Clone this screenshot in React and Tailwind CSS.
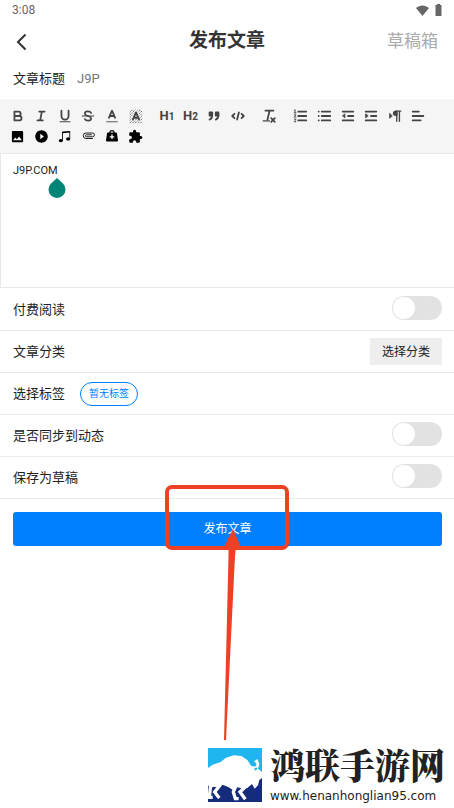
import React, { useState } from "react";
import { MdImage, MdPlayCircleFilled, MdExtension } from "react-icons/md";
import { BsMusicNoteBeamed } from "react-icons/bs";

function ToolIcon({ children }) {
  return (
    <svg className="w-4 h-4" viewBox="0 0 18 18" fill="none" stroke="#444" strokeWidth="2" strokeLinejoin="round" strokeLinecap="round">
      {children}
    </svg>
  );
}

function Heading({ level }) {
  return (
    <span className="flex items-baseline text-[13px] leading-4 font-bold text-[#444]">
      H<span className="text-[10px]">{level}</span>
    </span>
  );
}

const textTools = [
  { name: "Bold", icon: <ToolIcon><path d="M5 4h4.5a2.5 2.5 0 0 1 0 5H5zM5 9h5.5a2.5 2.5 0 0 1 0 5H5z" /></ToolIcon> },
  { name: "Italic", icon: <ToolIcon><path d="M7 4h6M5 14h6M8 14l2-10" /></ToolIcon> },
  { name: "Underline", icon: <ToolIcon><path d="M5 3v6a4 4 0 0 0 8 0V3" /><path strokeWidth="1.3" d="M3.5 15.5h11" /></ToolIcon> },
  {
    name: "Strike",
    icon: (
      <ToolIcon>
        <path strokeWidth="1.300" d="M2.500 9h13" />
        <path strokeWidth="1.900" d="M12.500 5.500C11.500 3.500 5.500 3 5.500 6.200c0 1.500 1.500 2.300 3.500 2.800M5.500 12.500c1 2 7 2.500 7-.7 0-1.300-1-2-2.500-2.500" />
      </ToolIcon>
    ),
  },
  { name: "Color", icon: <ToolIcon><path d="M5.500 11L9 3l3.500 8M11.600 9H6.400" /><path strokeWidth="1" d="M3 15.500h12" /></ToolIcon> },
  {
    name: "Background",
    icon: (
      <ToolIcon>
        <path strokeWidth="1" strokeDasharray="1.500 1" strokeLinecap="butt" d="M2 5l3-3M2 8l6-6M2 11l9-9M2 14L14 2M2 17L16 3M5 17L16 6M8 17l8-8M11 17l5-5M14 17l2-2" />
        <path stroke="#f5f5f5" strokeWidth="4" d="M5.500 13L9 5l3.500 8" />
        <path strokeWidth="2.200" d="M5.500 13L9 5l3.500 8M11.600 11H6.400" />
      </ToolIcon>
    ),
  },
  null,
  { name: "Heading 1", icon: <Heading level={1} /> },
  { name: "Heading 2", icon: <Heading level={2} /> },
  {
    name: "Quote",
    icon: (
      <ToolIcon>
        <path fill="#444" d="M4 5h3v3.500H4zM11 5h3v3.500h-3z" />
        <path d="M7 8c0 3-1 4.500-3 5M14 8c0 3-1 4.500-3 5" />
      </ToolIcon>
    ),
  },
  { name: "Code", icon: <ToolIcon><path d="M5 6.500L2.500 9 5 11.500M13 6.500L15.500 9 13 11.500M10 5L8 13" /></ToolIcon> },
  null,
  {
    name: "Clear format",
    icon: (
      <ToolIcon>
        <path d="M5 3h9M9.700 3L7.300 13M11.500 11.500l4 4M15.500 11.500l-4 4" />
        <path strokeWidth="1.300" d="M2.500 14.500h7" />
      </ToolIcon>
    ),
  },
  null,
  {
    name: "Ordered list",
    icon: (
      <ToolIcon>
        <path d="M7 4h9M7 9h9M7 14h9" />
        <path strokeWidth="1" d="M2.500 2.500l1-.5v3.500M2.500 5.500h2M2.500 7.700h2l-2 2.600h2M2.500 12.500h2l-1 1.500 1 1.500h-2" />
      </ToolIcon>
    ),
  },
  { name: "Bullet list", icon: <ToolIcon><path d="M6.500 4H16M6.500 9H16M6.500 14H16M3 4h.1M3 9h.1M3 14h.1" /></ToolIcon> },
  { name: "Outdent", icon: <ToolIcon><path d="M3 4h12M9 9h6M3 14h12" /><path fill="#444" strokeWidth="1" d="M5.500 7v4L3 9z" /></ToolIcon> },
  { name: "Indent", icon: <ToolIcon><path d="M3 4h12M9 9h6M3 14h12" /><path fill="#444" strokeWidth="1" d="M3 7v4l2.500-2z" /></ToolIcon> },
  {
    name: "Direction",
    icon: (
      <ToolIcon>
        <path fill="#444" strokeWidth="1" d="M3 6.500v5L5.500 9z" />
        <path fill="#444" strokeWidth="1" d="M11 3.500H9.500a2.500 2.500 0 0 0 0 5H11z" />
        <path strokeWidth="1.500" d="M11 3.500v11.500M14 3.500v11.500M10 3.500h5.500" />
      </ToolIcon>
    ),
  },
  { name: "Align", icon: <ToolIcon><path d="M3 4h7M3 9h12M3 14h9" /></ToolIcon> },
];

const mediaTools = [
  { name: "Image", icon: <MdImage size={15} /> },
  { name: "Video", icon: <MdPlayCircleFilled size={15} /> },
  { name: "Audio", icon: <BsMusicNoteBeamed size={13} /> },
  {
    name: "Attachment",
    icon: (
      <svg width="13" height="8" viewBox="0 0 26 16" fill="none" stroke="#222" strokeWidth="2" strokeLinecap="round">
        <path d="M21 13H8A5.500 5.500 0 0 1 8 2h13a3.800 3.800 0 0 1 0 7.600H9a2 2 0 0 1 0-4h10" />
      </svg>
    ),
  },
  {
    name: "Medical",
    icon: (
      <svg width="12" height="12" viewBox="0 0 24 24">
        <path fill="none" stroke="#000" strokeWidth="2.500" d="M8 7V4a3 3 0 0 1 3-2.500h2A3 3 0 0 1 16 4v3" />
        <path d="M4 5h16a2 2 0 0 1 2 2l2 14a2 2 0 0 1-2 2H2a2 2 0 0 1-2-2L2 7a2 2 0 0 1 2-2z" />
        <path stroke="#fff" strokeWidth="2.500" d="M12 9v9M7.500 13.500h9" />
      </svg>
    ),
  },
  { name: "Plugin", icon: <MdExtension size={15} /> },
];

const toolGrid = "grid grid-cols-[repeat(6,3fr)_1fr_repeat(4,3fr)_1fr_3fr_1fr_repeat(6,3fr)] h-5";

function ToolRow({ tools }) {
  return (
    <div className={toolGrid}>
      {tools.map((tool, i) =>
        tool ? (
          <button key={tool.name} type="button" aria-label={tool.name} className="flex items-center justify-center min-w-0 text-black">
            {tool.icon}
          </button>
        ) : (
          <span key={i} />
        )
      )}
    </div>
  );
}

function Switch({ id, checked, onChange }) {
  return (
    <span className="relative inline-flex w-[50px] h-6">
      <input
        id={id}
        type="checkbox"
        role="switch"
        checked={checked}
        onChange={(e) => onChange(e.target.checked)}
        className="peer appearance-none w-full h-full rounded-full bg-[#e2e2e2] checked:bg-[#007fff]"
      />
      <span className="absolute left-px top-px w-[22px] h-[22px] rounded-full bg-white pointer-events-none peer-checked:left-[27px]" />
    </span>
  );
}

function Row({ label, htmlFor, children }) {
  return (
    <div className="flex items-center min-h-[42px] pl-[13px] pr-3 border-b border-[#ebebeb]">
      <label htmlFor={htmlFor} className="text-[13px]">{label}</label>
      {children}
    </div>
  );
}

// Red frame and arrow that point at the publish button
function Pointer() {
  return (
    <svg className="absolute left-1/2 -top-7 -translate-x-1/2 pointer-events-none" width="126" height="258" viewBox="0 0 126 258">
      <rect x="2" y="3" width="120" height="61" rx="5" fill="none" stroke="#ed4024" strokeWidth="4" />
      <path fill="#ed4024" d="M68 45l8 18h-5L70 72 61 256h-2L63.500 72V63H59z" />
    </svg>
  );
}

function SiteLogo() {
  return (
    <svg className="w-[54px] h-[54px] shrink-0" viewBox="0 0 162 162" aria-hidden="true">
      <path fill="#1fb6f0" d="M0 0h162v90H0z" />
      <path fill="#152b7b" d="M0 88h162v74H0z" />
      <path
        fill="#fff"
        d="M0 60L14 50 38 42 54 29 78 22 100 24 118 36 130 54 142 56 146 48 138 40 148 33 154 48 150 62 162 72V90L154 96 150 112 140 122 132 108 118 120 108 122 88 118 78 128 62 118 44 110 34 120 18 116 8 120 0 112z"
      />
      <path
        fill="none"
        stroke="#fff"
        strokeWidth="10"
        d="M8 110L4 148H14M36 112L20 132 34 150M84 112L76 132 82 152H92M114 114L96 132 112 154"
      />
      <path fill="#1fb6f0" d="M138 62l8-4 2 5-6 5z" />
    </svg>
  );
}

export default function App() {
  const [title, setTitle] = useState("J9P");
  const [content, setContent] = useState("J9P.COM");
  const [paid, setPaid] = useState(false);
  const [sync, setSync] = useState(false);
  const [draft, setDraft] = useState(false);

  return (
    <div className="min-h-screen flex flex-col bg-white text-[#222] font-['Roboto','Noto_Sans_CJK_SC',sans-serif]">
      {/* Status bar */}
      <div className="flex items-center justify-between h-5 pl-3 pr-3 text-[12px] text-[#666]">
        <span>3:08</span>
        <div className="flex items-center gap-[6px] text-[#666]">
          <svg width="13" height="11" viewBox="0 0 13 11" fill="currentColor"><path d="M0 3C4-.5 9-.5 13 3L6.500 11z" /></svg>
          <svg width="7" height="12" viewBox="0 0 7 12" fill="currentColor"><path d="M2 0h3v1h1.500v11h-6V1H2z" /></svg>
        </div>
      </div>

      {/* Header */}
      <header className="grid grid-cols-[1fr_auto_1fr] items-center h-[43px] pl-4 pr-4">
        <button type="button" aria-label="返回" className="justify-self-start">
          <svg width="11" height="18" viewBox="0 0 11 18" fill="none" stroke="#333" strokeWidth="2"><path d="M9.500 1.500L2 9l7.500 7.500" /></svg>
        </button>
        <h1 className="text-[19px] font-bold text-[#333]">发布文章</h1>
        <button type="button" className="justify-self-end text-[17px] text-[#aaa]">草稿箱</button>
      </header>

      <div className="flex items-center h-[31px] mb-[5px] pl-[13px] pr-3 gap-3 text-[13px]">
        <label htmlFor="title">文章标题</label>
        <input
          id="title"
          value={title}
          onChange={(e) => setTitle(e.target.value)}
          className="flex-1 min-w-0 outline-none text-[#777]"
        />
      </div>

      {/* Editor */}
      <div className="bg-[#f5f5f5] border-b border-[#e8e8e8] pt-[7px] pb-[7px] pl-[6px] pr-6">
        <ToolRow tools={textTools} />
        <ToolRow tools={mediaTools} />
      </div>
      <div className="relative border-l border-b border-[#e8e8e8]">
        <textarea
          aria-label="文章内容"
          value={content}
          onChange={(e) => setContent(e.target.value)}
          className="block w-full h-[133px] px-3 py-[9px] text-[11px] leading-4 resize-none outline-none"
        />
        <svg className="absolute left-[47px] top-6 pointer-events-none" width="18" height="21" viewBox="0 0 18 21">
          <path fill="#008577" d="M9 0l6 5.500a8.500 8.500 0 1 1-12 0z" />
        </svg>
      </div>

      {/* Options */}
      <div className="pt-px">
        <Row label="付费阅读" htmlFor="paid">
          <span className="ml-auto flex pb-1"><Switch id="paid" checked={paid} onChange={setPaid} /></span>
        </Row>
        <Row label="文章分类" htmlFor="category">
          <button id="category" type="button" className="ml-auto h-[27px] px-3 bg-[#eee] text-[12px]">选择分类</button>
        </Row>
        <Row label="选择标签" htmlFor="tags">
          <button id="tags" type="button" className="ml-[15px] h-6 px-2 rounded-full border border-[#007fff] text-[10px] text-[#007fff]">暂无标签</button>
        </Row>
        <Row label="是否同步到动态" htmlFor="sync">
          <span className="ml-auto flex pb-1"><Switch id="sync" checked={sync} onChange={setSync} /></span>
        </Row>
        <Row label="保存为草稿" htmlFor="draft">
          <span className="ml-auto flex pb-1"><Switch id="draft" checked={draft} onChange={setDraft} /></span>
        </Row>
      </div>

      <div className="relative mt-[13px] ml-[13px] mr-3">
        <button type="button" className="block w-full h-[34px] rounded-[3px] bg-[#007fff] text-white text-[12px]">发布文章</button>
        <Pointer />
      </div>

      {/* Site mark */}
      <footer className="mt-auto flex items-center justify-end gap-2 pr-[9px] pb-1 text-[#222]">
        <SiteLogo />
        <div>
          <div className="text-[35px] leading-9 font-black font-['Noto_Serif_CJK_SC','Noto_Sans_CJK_SC',serif]">鸿联手游网</div>
          <a href="#" className="block mt-[6px] text-[12px] leading-4 font-['DejaVu_Sans',sans-serif]">www.henanhonglian95.com</a>
        </div>
      </footer>
    </div>
  );
}
